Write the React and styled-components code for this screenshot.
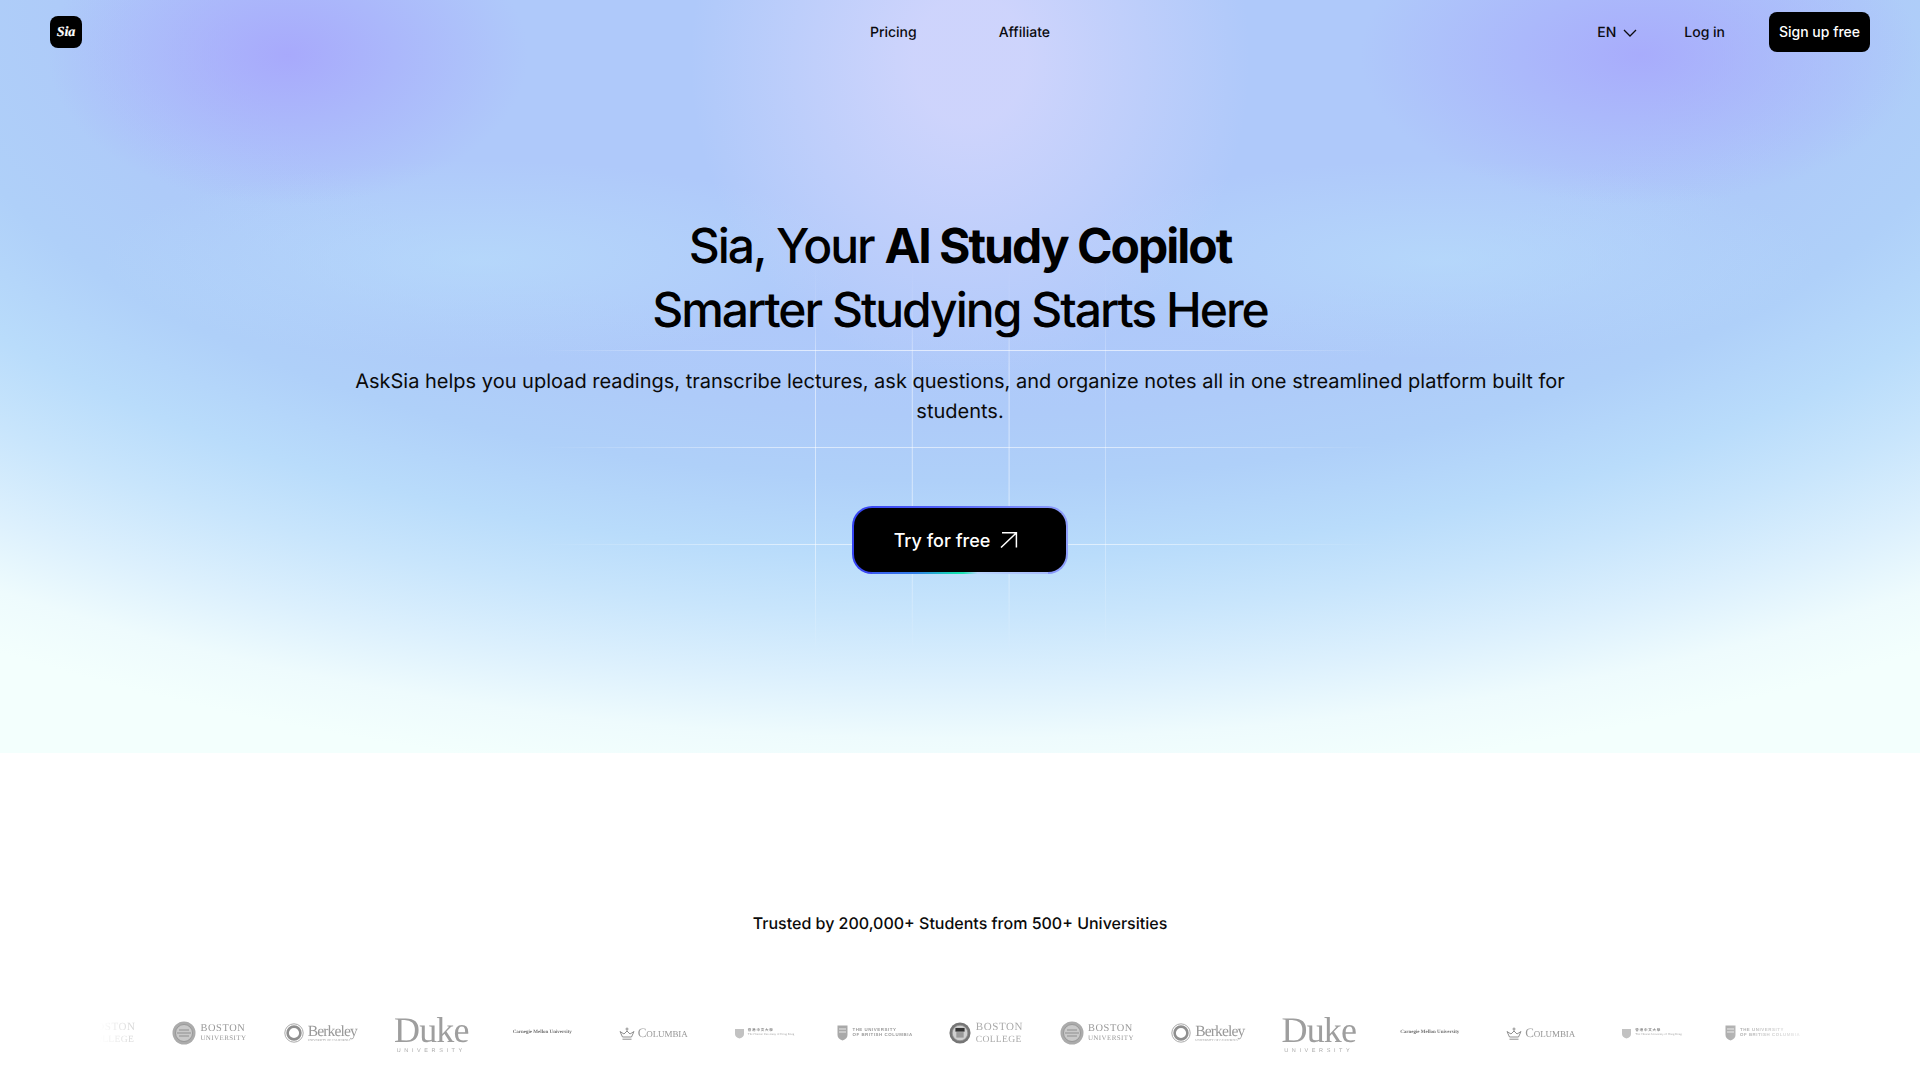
import styled, { createGlobalStyle } from 'styled-components';

const GlobalStyle = createGlobalStyle`
  * { box-sizing: border-box; }
  html, body { margin: 0; padding: 0; background: #fff; }
  body {
    font-family: Inter, "Liberation Sans", sans-serif;
    color: #000;
    overflow-x: hidden;
    text-rendering: geometricPrecision;
  }
`;

const Page = styled.div`
  width: 100%;
  height: 1080px;
  overflow: hidden;
  background: #fff;
`;

const Hero = styled.section`
  position: relative;
  height: 753px;
  overflow: hidden;
  background:
    radial-gradient(ellipse 240px 150px at 288px 55px, rgba(167, 166, 252, 0.9), rgba(167, 166, 252, 0) 100%),
    radial-gradient(ellipse 280px 150px at 1640px 55px, rgba(167, 168, 252, 0.88), rgba(167, 168, 252, 0) 100%),
    radial-gradient(ellipse 280px 320px at 970px 60px, rgba(206, 212, 252, 0.98) 20%, rgba(206, 212, 252, 0) 100%),
    radial-gradient(ellipse 380px 100px at 480px 260px, rgba(184, 222, 251, 0.65), rgba(184, 222, 251, 0) 100%),
    radial-gradient(ellipse 380px 100px at 1440px 260px, rgba(184, 222, 251, 0.65), rgba(184, 222, 251, 0) 100%),
    radial-gradient(
      ellipse 1800px 830px at 960px 0px,
      #afc9fa 40%,
      #aecbf9 50%,
      #afd0f9 58%,
      #b9dcfb 67%,
      #c8e5fc 74%,
      #dcf0fd 82%,
      #eefbfd 89%,
      #f3fffd 95%
    );
`;

const GridLines = styled.div`
  position: absolute;
  left: 815px;
  top: 260px;
  width: 291px;
  height: 395px;
  background-image: linear-gradient(90deg, rgba(255, 255, 255, 0.5) 1px, transparent 1px);
  background-size: 96.8px 100%;
  mask-image: linear-gradient(180deg, transparent 0, rgba(0, 0, 0, 0.3) 60px, #000 110px, #000 290px, rgba(0, 0, 0, 0.35) 360px, transparent 100%);
`;

const WideLines = styled.div`
  position: absolute;
  left: 540px;
  top: 350px;
  width: 840px;
  height: 195px;
  background-image:
    linear-gradient(180deg, rgba(255, 255, 255, 0.14) 1px, transparent 1px),
    linear-gradient(180deg, rgba(255, 255, 255, 0.55) 1px, transparent 1px);
  background-size: 100% 100%, 100% 97px;
  background-position: 0 0, 0 97px;
  background-repeat: no-repeat, repeat-y;
  mask-image: linear-gradient(90deg, transparent, #000 30%, #000 70%, transparent);
`;

const Nav = styled.nav`
  position: relative;
  display: grid;
  grid-template-columns: 1fr auto 1fr;
  align-items: center;
  height: 64px;
  padding: 0 50px;
`;

const Logo = styled.div`
  width: 32px;
  height: 32px;
  padding-top: 1px;
  border-radius: 8px;
  background: #000;
  color: #fff;
  font-family: "Liberation Serif", serif;
  font-style: italic;
  font-weight: 700;
  font-size: 14px;
  -webkit-text-stroke: 0.2px #fff;
  display: flex;
  align-items: center;
  justify-content: center;
`;

const NavLinks = styled.div`
  display: flex;
  gap: 82px;
  padding-top: 1px;
`;

const NavLink = styled.a`
  font-size: 14px;
  font-weight: 500;
  line-height: 20px;
  color: #0b0b0f;
`;

const NavRight = styled.div`
  display: flex;
  align-items: center;
  justify-content: flex-end;
`;

const Lang = styled.div`
  display: flex;
  align-items: center;
  gap: 7px;
  padding-top: 1px;
  font-size: 14px;
  font-weight: 500;
  line-height: 20px;
  margin-right: 47px;
  color: #0b0b0f;
`;

const LogIn = styled(NavLink)`
  padding-top: 1px;
`;

const SignUp = styled.button`
  height: 40px;
  width: 101px;
  margin-left: 44px;
  padding: 0;
  border: 0;
  border-radius: 8px;
  background: #000;
  color: #fff;
  font-family: inherit;
  font-size: 14px;
  font-weight: 500;
  line-height: 20px;
`;

const HeroBody = styled.div`
  position: relative;
  display: flex;
  flex-direction: column;
  align-items: center;
  padding-top: 150px;
`;

const Title = styled.h1`
  margin: 0;
  font-size: 48px;
  line-height: 64px;
  font-weight: 500;
  letter-spacing: -2px;
  text-align: center;
  color: #000;

  b {
    font-weight: 700;
  }
`;

const Lead = styled.p`
  margin: 24px 0 0;
  width: 1240px;
  font-size: 20px;
  line-height: 30px;
  text-align: center;
  color: #0a0a0a;
`;

const Cta = styled.button`
  position: relative;
  display: flex;
  align-items: center;
  justify-content: center;
  gap: 10px;
  width: 216px;
  height: 68px;
  margin-top: 80px;
  padding: 0 8px 0 0;
  border: 2px solid transparent;
  border-radius: 20px;
  background:
    linear-gradient(#000, #000) padding-box,
    linear-gradient(90deg, #3443f2 0%, #4f5ef5 40%, #8e9ffb 100%) border-box;
  color: #fff;
  font-family: inherit;
  font-size: 18px;
  font-weight: 500;

  &::after {
    content: "";
    position: absolute;
    left: 18px;
    right: 18px;
    bottom: -2px;
    height: 2px;
    background: linear-gradient(90deg, #3a5cf0 0%, #2f7fe8 25%, #12e0b0 48%, #1fe3b6 52%, #b9d4fc 60%, #a6bafc 100%);
  }
`;

const Trusted = styled.section`
  display: flex;
  flex-direction: column;
  align-items: center;
  padding-top: 159px;
`;

const TrustedText = styled.p`
  margin: 0;
  font-size: 16px;
  line-height: 22px;
  font-weight: 500;
  color: #0a0a0a;
`;

const Strip = styled.div`
  width: 1720px;
  margin-top: 69px;
  overflow: hidden;
  filter: blur(0.35px);
  mask-image: linear-gradient(90deg, transparent 0, #000 70px, #000 1620px, transparent 1720px);
`;

const Track = styled.div`
  display: flex;
  width: max-content;
  margin-left: -57px;
`;

const Cell = styled.div`
  flex: 0 0 110.95px;
  height: 60px;
  display: flex;
  align-items: center;
  justify-content: center;
  gap: ${(p) => p.$gap || 4}px;
  color: #999;
  font-family: "Liberation Serif", "Noto Sans CJK TC", serif;
  white-space: nowrap;
`;

const Stack = styled.div`
  display: flex;
  flex-direction: column;
  align-items: flex-start;
  line-height: 1;
`;

const Words = styled.span`
  font-size: ${(p) => p.$size}px;
  letter-spacing: ${(p) => p.$track || 0}px;
  line-height: ${(p) => p.$line || 1.1};
  font-family: ${(p) => (p.$sans ? '"Liberation Sans", sans-serif' : 'inherit')};
  font-weight: ${(p) => p.$weight || 400};
  font-variant: ${(p) => (p.$caps ? 'small-caps' : 'normal')};
  color: ${(p) => p.$color || 'inherit'};
`;

const DukeBox = styled(Stack)`
  align-items: center;
`;

const ArrowIcon = () => (
  <svg width="18" height="16" viewBox="0 0 18 16" fill="none" stroke="#fff" strokeWidth="1.5">
    <path d="M1 15.5 L16.2 1 M2 0.8 H16.4 V15.5" />
  </svg>
);

const ChevronIcon = () => (
  <svg width="14" height="8" viewBox="0 0 14 8" fill="none" stroke="#0b0b0f" strokeWidth="1.3">
    <path d="M1 1 L7 7 L13 1" />
  </svg>
);

const Seal = ({ size = 24, dark }) => (
  <svg width={size} height={size} viewBox="0 0 24 24" fill="none">
    <circle cx="12" cy="12" r="11.5" fill={dark ? '#757575' : '#ababab'} />
    <circle cx="12" cy="12" r="8.5" fill={dark ? '#d0d0d0' : '#c9c9c9'} stroke="#8f8f8f" strokeWidth="0.8" />
    {dark ? (
      <>
        <rect x="7" y="6.5" width="10" height="4" fill="#333" />
        <rect x="8" y="11" width="8" height="6" fill="#999" />
      </>
    ) : (
      <path d="M5 12 H19 M7 9 H17 M7 15 H17" stroke="#8f8f8f" strokeWidth="1.2" />
    )}
  </svg>
);

const Ring = () => (
  <svg width="20" height="20" viewBox="0 0 20 20" fill="none">
    <circle cx="10" cy="10" r="9.2" stroke="#a0a0a0" strokeWidth="0.9" />
    <circle cx="10" cy="10" r="6.4" stroke="#8f8f8f" strokeWidth="2.6" />
  </svg>
);

const Crown = () => (
  <svg width="16" height="13" viewBox="0 0 16 13" fill="none" stroke="#8f8f8f" strokeWidth="1">
    <path d="M8 0.5 V4 M6.5 2 H9.5 M1 4.5 L3.5 10 H12.5 L15 4.5 L11 7 L8 4 L5 7 Z M3.5 12.2 H12.5" />
  </svg>
);

const Shield = () => (
  <svg width="11" height="16" viewBox="0 0 11 16">
    <path d="M0.5 0.5 H10.5 V10 Q10.5 13.5 5.5 15.5 Q0.5 13.5 0.5 10 Z" fill="#a9a9a9" />
    <path d="M2 4 H9 M2 7 H9" stroke="#e8e8e8" strokeWidth="1" />
  </svg>
);

const Crest = () => (
  <svg width="11" height="11" viewBox="0 0 11 11">
    <path d="M1 1 H10 V6 Q10 9 5.5 10.5 Q1 9 1 6 Z" fill="#c2c2c2" />
  </svg>
);

const BostonCollege = () => (
  <Cell $gap={5}>
    <Seal size={22} dark />
    <Stack>
      <Words $size={11} $track={0.6} $line={1.3} $color="#aaa">BOSTON</Words>
      <Words $size={9.6} $track={0.3} $line={1.3} $color="#aaa">COLLEGE</Words>
    </Stack>
  </Cell>
);

const BostonUni = () => (
  <Cell $gap={4}>
    <Seal />
    <Stack>
      <Words $size={10.4} $track={0.6}>BOSTON</Words>
      <Words $size={7} $track={0.4}>UNIVERSITY</Words>
    </Stack>
  </Cell>
);

const Berkeley = () => (
  <Cell $gap={4}>
    <Ring />
    <Stack>
      <Words $size={15.6} $track={-0.9} $line={1}>Berkeley</Words>
      <Words $size={3} $track={0.05}>UNIVERSITY OF CALIFORNIA</Words>
    </Stack>
  </Cell>
);

const Duke = () => (
  <Cell>
    <DukeBox>
      <Words $size={36} $track={-0.9} $line={1} $color="#9e9e9e">Duke</Words>
      <Words $size={5.5} $track={3.6} $sans $line={1.2} $color="#aaa">UNIVERSITY</Words>
    </DukeBox>
  </Cell>
);

const Carnegie = () => (
  <Cell>
    <Words $size={5} $weight={700} $color="#707070">Carnegie Mellon University</Words>
  </Cell>
);

const Columbia = () => (
  <Cell $gap={3}>
    <Crown />
    <Words $size={13} $caps $track={-0.1}>Columbia</Words>
  </Cell>
);

const HongKong = () => (
  <Cell $gap={3}>
    <Crest />
    <Stack>
      <Words $size={3.5} $track={0.8} $weight={700} $color="#888">香港中文大學</Words>
      <Words $size={3} $color="#999">The Chinese University of Hong Kong</Words>
    </Stack>
  </Cell>
);

const Ubc = () => (
  <Cell $gap={4}>
    <Shield />
    <Stack>
      <Words $size={4.4} $track={0.55} $sans $weight={700}>THE UNIVERSITY</Words>
      <Words $size={4.4} $track={0.55} $sans $weight={700}>OF BRITISH COLUMBIA</Words>
    </Stack>
  </Cell>
);

const logoSet = [BostonCollege, BostonUni, Berkeley, Duke, Carnegie, Columbia, HongKong, Ubc];

const App = () => (
  <>
    <GlobalStyle />
    <Page>
      <Hero>
        <GridLines />
        <WideLines />
        <Nav>
          <Logo>Sia</Logo>
          <NavLinks>
            <NavLink>Pricing</NavLink>
            <NavLink>Affiliate</NavLink>
          </NavLinks>
          <NavRight>
            <Lang>
              EN <ChevronIcon />
            </Lang>
            <LogIn>Log in</LogIn>
            <SignUp>Sign up free</SignUp>
          </NavRight>
        </Nav>
        <HeroBody>
          <Title>
            Sia, Your <b>AI Study Copilot</b>
            <br />
            Smarter Studying Starts Here
          </Title>
          <Lead>
            AskSia helps you upload readings, transcribe lectures, ask questions, and organize notes all in one
            streamlined platform built for students.
          </Lead>
          <Cta>
            Try for free <ArrowIcon />
          </Cta>
        </HeroBody>
      </Hero>
      <Trusted>
        <TrustedText>Trusted by 200,000+ Students from 500+ Universities</TrustedText>
        <Strip>
          <Track>
            {[...logoSet, ...logoSet].map((Item, i) => (
              <Item key={i} />
            ))}
          </Track>
        </Strip>
      </Trusted>
    </Page>
  </>
);

export default App;
